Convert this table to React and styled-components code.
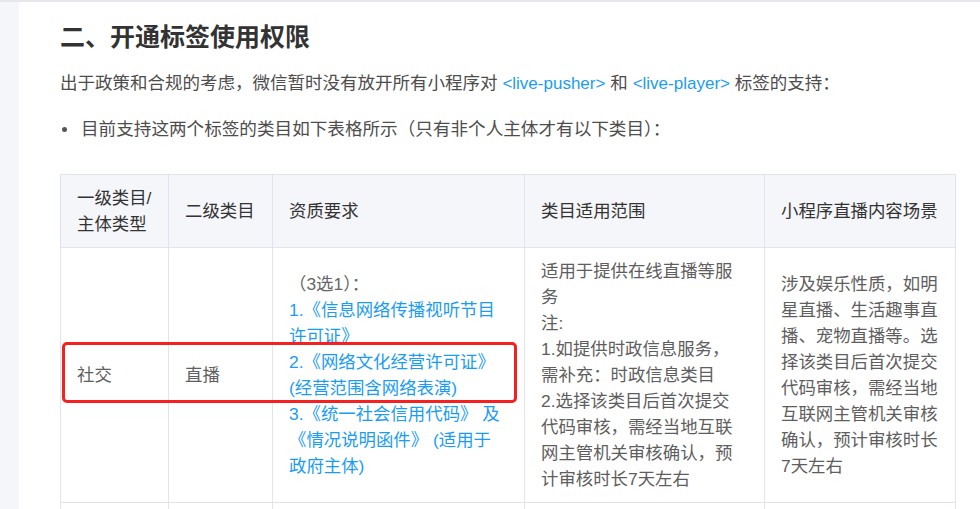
import React from 'react'
import styled, { createGlobalStyle } from 'styled-components'

const GlobalStyle = createGlobalStyle`
  html, body {
    margin: 0;
    padding: 0;
    background: #fff;
  }
  body {
    font-family: 'Liberation Sans', 'Noto Sans CJK SC', sans-serif;
    overflow: hidden;
  }
`

const columns = [108, 104, 252, 240, 191]

const headers = [
  ['一级类目/', '主体类型'],
  ['二级类目'],
  ['资质要求'],
  ['类目适用范围'],
  ['小程序直播内容场景'],
]

const scope = [
  '适用于提供在线直播等服',
  '务',
  '注:',
  '1.如提供时政信息服务，',
  '需补充：时政信息类目',
  '2.选择该类目后首次提交',
  '代码审核，需经当地互联',
  '网主管机关审核确认，预',
  '计审核时长7天左右',
]

const scene = [
  '涉及娱乐性质，如明',
  '星直播、生活趣事直',
  '播、宠物直播等。选',
  '择该类目后首次提交',
  '代码审核，需经当地',
  '互联网主管机关审核',
  '确认，预计审核时长',
  '7天左右',
]

const licences = [
  '1.《信息网络传播视听节目',
  '许可证》',
  '2.《网络文化经营许可证》',
  '(经营范围含网络表演)',
  '3.《统一社会信用代码》 及',
  '《情况说明函件》 (适用于',
  '政府主体)',
]

const Lines = ({ lines }) =>
  lines.map((line, i) => (
    <React.Fragment key={i}>
      {i > 0 && <br />}
      {line}
    </React.Fragment>
  ))

const App = () => {
  return (
    <Page>
      <GlobalStyle />
      <Sidebar />
      <Content>
        <Heading>二、开通标签使用权限</Heading>
        <Paragraph>
          出于政策和合规的考虑，微信暂时没有放开所有小程序对 <Link>&lt;live-pusher&gt;</Link> 和{' '}
          <Link>&lt;live-player&gt;</Link> 标签的支持：
        </Paragraph>
        <BulletItem>目前支持这两个标签的类目如下表格所示（只有非个人主体才有以下类目）：</BulletItem>
        <TableWrap>
          <Table>
            <colgroup>
              {columns.map((w, i) => (
                <col key={i} style={{ width: w }} />
              ))}
            </colgroup>
            <thead>
              <tr>
                {headers.map((h, i) => (
                  <Th key={i}>
                    <Lines lines={h} />
                  </Th>
                ))}
              </tr>
            </thead>
            <tbody>
              <Row $height={255}>
                <Td>社交</Td>
                <Td>直播</Td>
                <Td>
                  <Muted>（3选1）：</Muted>
                  <br />
                  <LinkBlock>
                    <Lines lines={licences} />
                  </LinkBlock>
                </Td>
                <Td>
                  <Lines lines={scope} />
                </Td>
                <Td>
                  <Lines lines={scene} />
                </Td>
              </Row>
              <Row $height={20}>
                <Td />
                <Td />
                <Td />
                <Td />
                <Td />
              </Row>
            </tbody>
          </Table>
          <Highlight />
        </TableWrap>
      </Content>
    </Page>
  )
}

const Page = styled.div`
  display: flex;
  height: 100vh;
  overflow: hidden;
  border-top: 2px solid #e6e7ea;
  box-sizing: border-box;
`

const Sidebar = styled.aside`
  width: 19px;
  flex-shrink: 0;
  background: #f5f6fa;
`

const Content = styled.main`
  flex: 1;
  padding: 18px 0 0 41px;
`

const Heading = styled.h2`
  margin: 0;
  font-size: 25px;
  line-height: 34px;
  font-weight: 700;
  color: #333;
`

const Paragraph = styled.p`
  margin: 16px 0 0;
  font-size: 17.5px;
  line-height: 26px;
  color: #4d4d4d;
`

const Link = styled.span`
  color: #1a9cf5;
  font-size: 17px;
`

const BulletItem = styled.div`
  margin-top: 19px;
  display: flex;
  align-items: center;
  gap: 14px;
  padding-left: 2px;
  font-size: 17.6px;
  line-height: 26px;
  color: #4d4d4d;

  &::before {
    content: '';
    width: 5px;
    height: 5px;
    border-radius: 50%;
    background: #555;
  }
`

const TableWrap = styled.div`
  position: relative;
  margin-top: 32px;
  width: 895px;
`

const Table = styled.table`
  width: 895px;
  table-layout: fixed;
  border-collapse: collapse;
  font-size: 17.4px;
  line-height: 26px;
`

const Th = styled.th`
  height: 73px;
  padding: 10px 16px;
  box-sizing: border-box;
  background: #f5f6fa;
  border: 1px solid #e1e4ee;
  color: #333;
  font-weight: 400;
  text-align: left;
  vertical-align: middle;
  white-space: nowrap;
`

const Row = styled.tr`
  height: ${(p) => p.$height}px;
`

const Td = styled.td`
  padding: 10px 16px;
  border: 1px solid #e1e4ee;
  color: #5e5e5e;
  vertical-align: middle;
  white-space: nowrap;
`

const Muted = styled.span`
  color: #666;
`

const LinkBlock = styled.span`
  color: #1a9cf5;
`

const Highlight = styled.div`
  position: absolute;
  left: 2px;
  top: 168px;
  width: 455px;
  height: 61px;
  box-sizing: border-box;
  border: 3px solid #f5201f;
  border-radius: 5px;
  pointer-events: none;
`

export default App
